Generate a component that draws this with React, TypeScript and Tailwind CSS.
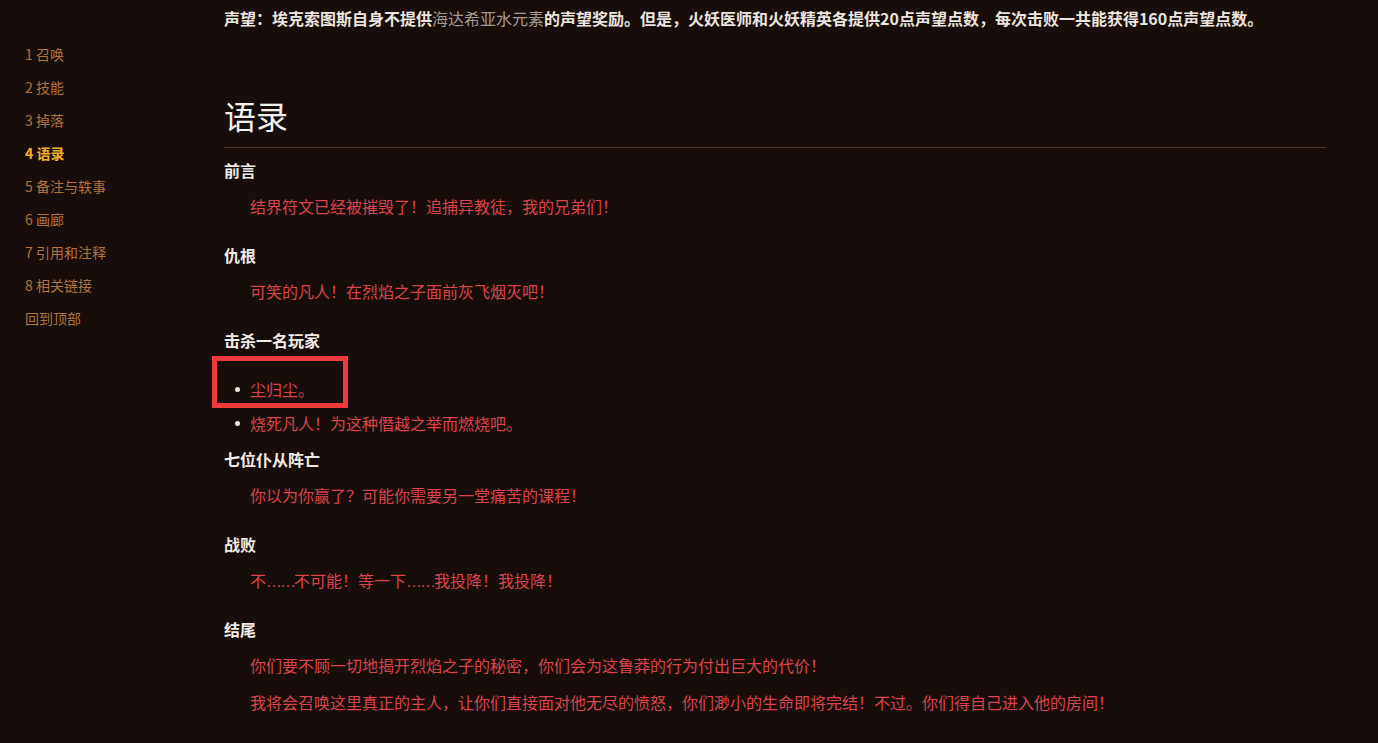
import React from 'react';

const toc = [
  { label: '1 召唤' },
  { label: '2 技能' },
  { label: '3 掉落' },
  { label: '4 语录', active: true },
  { label: '5 备注与轶事' },
  { label: '6 画廊' },
  { label: '7 引用和注释' },
  { label: '8 相关链接' },
  { label: '回到顶部' },
];

const Heading = ({ children, className = '' }: { children: React.ReactNode; className?: string }) => (
  <h3 className={`text-[16px] leading-[24px] font-bold text-[#f0ebe6] ${className}`}>{children}</h3>
);

const Quote = ({ children, className = '' }: { children: React.ReactNode; className?: string }) => (
  <p className={`pl-[26px] text-[16px] leading-[24px] text-[#dc4349] ${className}`}>{children}</p>
);

const Bullet = ({ children, className = '' }: { children: React.ReactNode; className?: string }) => (
  <li className={`flex items-center pl-[11px] text-[16px] leading-[24px] ${className}`}>
    <span className="w-[5px] h-[5px] rounded-full bg-[#eee6dc] mr-[10px]" />
    <span className="text-[#dc4349]">{children}</span>
  </li>
);

// ellipsis sits on the baseline in the original font
const Dots = () => <span className="font-['Liberation_Sans'] leading-[0px] tracking-[-2px]">……</span>;

const App = () => {
  return (
    <div
      className="relative flex min-h-[743px] w-full bg-[#170e0b] overflow-hidden"
      style={{ fontFamily: '"Noto Sans CJK SC", "Noto Sans", sans-serif' }}
    >
      <nav className="w-[224px] shrink-0 pl-[25px] pt-[38px]">
        <ul>
          {toc.map((item) => (
            <li
              key={item.label}
              className={`text-[14px] leading-[33px] ${
                item.active ? 'font-bold text-[#f2b126]' : 'text-[#b0743c]'
              }`}
            >
              {item.label}
            </li>
          ))}
        </ul>
      </nav>

      <main className="w-[1102px] shrink-0 pt-[6px]">
        <p className="text-[16px] leading-[24px] font-bold text-[#ebe5df] whitespace-nowrap">
          声望：埃克索图斯自身不提供<span className="font-normal text-[#a39a91]">海达希亚水元素</span>的声望奖励。但是，火妖医师和火妖精英各提供20点声望点数，每次击败一共能获得160点声望点数。
        </p>

        <h2 className="mt-[65px] pb-[12px] border-b border-[#4b3528] text-[32px] leading-[40px] text-[#f4f0ec]">
          语录
        </h2>

        <Heading className="mt-[10px]">前言</Heading>
        <Quote className="mt-[12px]">结界符文已经被摧毁了！追捕异教徒，我的兄弟们！</Quote>

        <Heading className="mt-[25px]">仇根</Heading>
        <Quote className="mt-[12px]">可笑的凡人！在烈焰之子面前灰飞烟灭吧！</Quote>

        <Heading className="mt-[25px]">击杀一名玩家</Heading>
        <ul>
          <Bullet className="mt-[25px]">尘归尘。</Bullet>
          <Bullet className="mt-[10px]">烧死凡人！为这种僭越之举而燃烧吧。</Bullet>
        </ul>

        <Heading className="mt-[12px]">七位仆从阵亡</Heading>
        <Quote className="mt-[12px]">你以为你赢了？可能你需要另一堂痛苦的课程！</Quote>

        <Heading className="mt-[25px]">战败</Heading>
        <Quote className="mt-[12px]">
          不<Dots />不可能！等一下<Dots />我投降！我投降！
        </Quote>

        <Heading className="mt-[25px]">结尾</Heading>
        <Quote className="mt-[12px]">你们要不顾一切地揭开烈焰之子的秘密，你们会为这鲁莽的行为付出巨大的代价！</Quote>
        <Quote className="mt-[13px]">我将会召唤这里真正的主人，让你们直接面对他无尽的愤怒，你们渺小的生命即将完结！不过。你们得自己进入他的房间！</Quote>
      </main>

      <div className="absolute left-[212px] top-[356px] w-[136px] h-[52px] border-[5px] border-[#f03a3d] pointer-events-none" />
    </div>
  );
};

export default App;
